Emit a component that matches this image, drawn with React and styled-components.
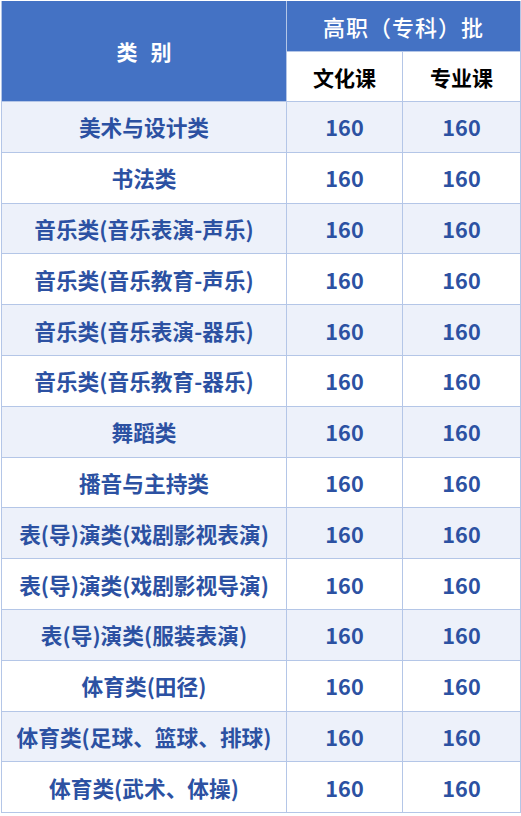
import React from "react";
import styled, { createGlobalStyle } from "styled-components";

const GlobalStyle = createGlobalStyle`
  body {
    margin: 0;
    background: #ffffff;
    font-family: "Noto Sans CJK SC", "Noto Sans", sans-serif;
  }
`;

const Wrapper = styled.div`
  padding: 1px 0 0 1px;
`;

const Table = styled.table`
  width: 519px;
  border-collapse: collapse;
  table-layout: fixed;
  border-left: 1px solid #4472c4;
  border-right: 1px solid #4472c4;
  border-bottom: 1px solid #4472c4;
`;

const HeadCell = styled.th`
  background-color: ${(p) => (p.$light ? "#ffffff" : "#4472c4")};
  color: ${(p) => (p.$light ? "#000000" : "#ffffff")};
  font-size: ${(p) => (p.$thin ? "22px" : "21px")};
  font-weight: ${(p) => (p.$thin ? 500 : 700)};
  height: ${(p) => p.$h}px;
  padding: 0;
  text-align: center;
  border: 1px solid #b4c6e7;
  border-top: none;
  letter-spacing: ${(p) => (p.$thin ? "1px" : "0")};
  word-spacing: 8px;
`;

const Row = styled.tr`
  background-color: ${(p) => (p.$shade ? "#edf1fa" : "#ffffff")};
`;

const Cell = styled.td`
  height: 49.8px;
  padding: 0;
  text-align: center;
  color: #2c51a2;
  font-size: 21.7px;
  font-weight: 700;
  border: 1px solid #b4c6e7;
  white-space: nowrap;
`;

const rows = [
  "美术与设计类",
  "书法类",
  "音乐类(音乐表演-声乐)",
  "音乐类(音乐教育-声乐)",
  "音乐类(音乐表演-器乐)",
  "音乐类(音乐教育-器乐)",
  "舞蹈类",
  "播音与主持类",
  "表(导)演类(戏剧影视表演)",
  "表(导)演类(戏剧影视导演)",
  "表(导)演类(服装表演)",
  "体育类(田径)",
  "体育类(足球、篮球、排球)",
  "体育类(武术、体操)",
];

const App = () => {
  return (
    <Wrapper>
      <GlobalStyle />
      <Table>
        <colgroup>
          <col style={{ width: "285px" }} />
          <col style={{ width: "116px" }} />
          <col style={{ width: "118px" }} />
        </colgroup>
        <thead>
          <tr>
            <HeadCell rowSpan={2} $h={100}>
              类 别
            </HeadCell>
            <HeadCell colSpan={2} $h={50} $thin>
              高职（专科）批
            </HeadCell>
          </tr>
          <tr>
            <HeadCell $light $h={49}>
              文化课
            </HeadCell>
            <HeadCell $light $h={49}>
              专业课
            </HeadCell>
          </tr>
        </thead>
        <tbody>
          {rows.map((name, i) => (
            <Row key={name} $shade={i % 2 === 0}>
              <Cell>{name}</Cell>
              <Cell>160</Cell>
              <Cell>160</Cell>
            </Row>
          ))}
        </tbody>
      </Table>
    </Wrapper>
  );
};

export default App;
